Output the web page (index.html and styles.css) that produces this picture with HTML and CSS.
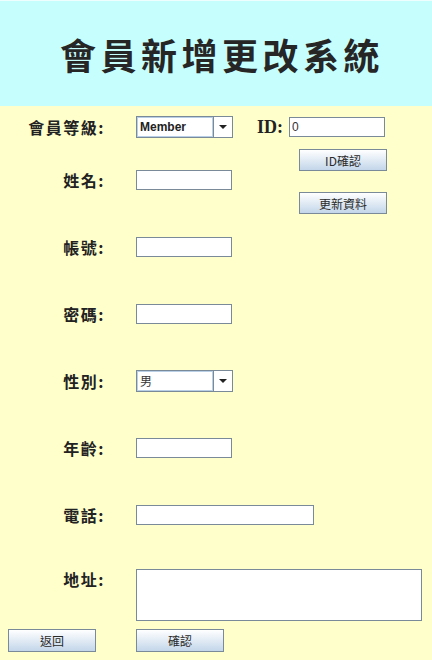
FILE: index.html
```html
<!DOCTYPE html>
<html lang="zh-Hant">
<head>
<meta charset="utf-8">
<title>會員新增更改系統</title>
<link rel="stylesheet" href="styles.css">
</head>
<body>
<header class="header">
  <h1 class="title">會員新增更改系統</h1>
</header>
<main class="main">
  <div class="row">
    <span class="label">會員等級:</span>
    <div class="combo"><span class="combo-value combo-bold">Member</span><span class="combo-arrow"></span></div>
    <span class="id-label">ID:</span>
    <input class="field field-id" value="0">
  </div>
  <div class="row-second">
    <div class="row row-name">
      <span class="label">姓名:</span>
      <input class="field">
    </div>
    <div class="side-buttons">
      <button class="btn">ID確認</button>
      <button class="btn">更新資料</button>
    </div>
  </div>
  <div class="rows">
    <div class="row">
      <span class="label">帳號:</span>
      <input class="field">
    </div>
    <div class="row">
      <span class="label">密碼:</span>
      <input class="field" type="password">
    </div>
    <div class="row">
      <span class="label">性別:</span>
      <div class="combo"><span class="combo-value">男</span><span class="combo-arrow"></span></div>
    </div>
    <div class="row">
      <span class="label">年齡:</span>
      <input class="field">
    </div>
    <div class="row">
      <span class="label">電話:</span>
      <input class="field field-wide">
    </div>
  </div>
  <div class="row row-address">
    <span class="label">地址:</span>
    <textarea class="area"></textarea>
  </div>
  <div class="bottom">
    <button class="btn btn-bottom">返回</button>
    <button class="btn btn-bottom">確認</button>
  </div>
</main>
</body>
</html>
```

FILE: styles.css
```css
* {
  box-sizing: border-box;
}

html,
body {
  margin: 0;
  padding: 0;
}

body {
  width: 432px;
  height: 660px;
  overflow: hidden;
  background: #ffffcc;
  font-family: "Noto Sans CJK TC", sans-serif;
}

.header {
  height: 106px;
  background: #c6fefe;
  border-top: 1px solid #eefefe;
  display: flex;
  align-items: center;
  justify-content: center;
}

.title {
  margin: 0;
  padding-left: 12px;
  font-family: "Noto Sans CJK TC", sans-serif;
  font-size: 36px;
  font-weight: 700;
  letter-spacing: 4.5px;
  line-height: 1;
  color: #262626;
}

.main {
  padding-top: 10px;
}

.row {
  display: flex;
  align-items: center;
}

.label {
  width: 105px;
  margin-right: 31px;
  text-align: right;
  white-space: nowrap;
  font-size: 16px;
  font-weight: 700;
  letter-spacing: 1.5px;
  line-height: 20px;
  color: #222;
}

.field {
  width: 96px;
  height: 20px;
  margin: 0;
  padding: 0 2px;
  border: 1px solid #7a8a99;
  background: #fff;
  font: 12px "Liberation Sans", "Noto Sans CJK TC", sans-serif;
  color: #333;
  outline: none;
}

.field-id {
  margin-left: 8px;
}

.field-wide {
  width: 178px;
}

.combo {
  display: flex;
  width: 97px;
  height: 22px;
  border: 1px solid #7a8a99;
  background: #fff;
}

.combo-value {
  flex: 1;
  display: flex;
  align-items: center;
  padding-left: 2px;
  border: 1px solid #b8cfe5;
  font: 12px "Liberation Sans", "Noto Sans CJK TC", sans-serif;
  color: #333;
}

.combo-bold {
  font-weight: 700;
  color: #222;
}

.combo-arrow {
  width: 19px;
  border-left: 1px solid #7a8a99;
  display: flex;
  align-items: center;
  justify-content: center;
}

.combo-arrow::after {
  content: "";
  border-left: 4px solid transparent;
  border-right: 4px solid transparent;
  border-top: 4px solid #222;
}

.id-label {
  width: 24px;
  margin-left: 24px;
  font: 700 18px "Liberation Serif", serif;
  line-height: 20px;
  color: #222;
}

.row-second {
  display: flex;
  align-items: flex-start;
}

.row-name {
  margin-top: 32px;
}

.side-buttons {
  display: flex;
  flex-direction: column;
  gap: 21px;
  margin-top: 11px;
  margin-left: 67px;
}

.btn {
  width: 88px;
  height: 22px;
  margin: 0;
  padding: 0;
  border: 1px solid #7a8a99;
  background: linear-gradient(#ffffff, #c3d6ea);
  font: 12px "Noto Sans CJK TC", sans-serif;
  color: #2a2a2a;
}

.rows {
  display: grid;
  grid-auto-rows: 67px;
  margin-top: -1px;
}

.row-address {
  align-items: flex-start;
  margin-top: 21px;
}

.area {
  width: 286px;
  height: 52px;
  margin: 0;
  border: 1px solid #7a8a99;
  background: #fff;
  resize: none;
  outline: none;
}

.bottom {
  display: flex;
  gap: 40px;
  padding-left: 8px;
  margin-top: 8px;
}

.btn-bottom {
  height: 23px;
}
```
